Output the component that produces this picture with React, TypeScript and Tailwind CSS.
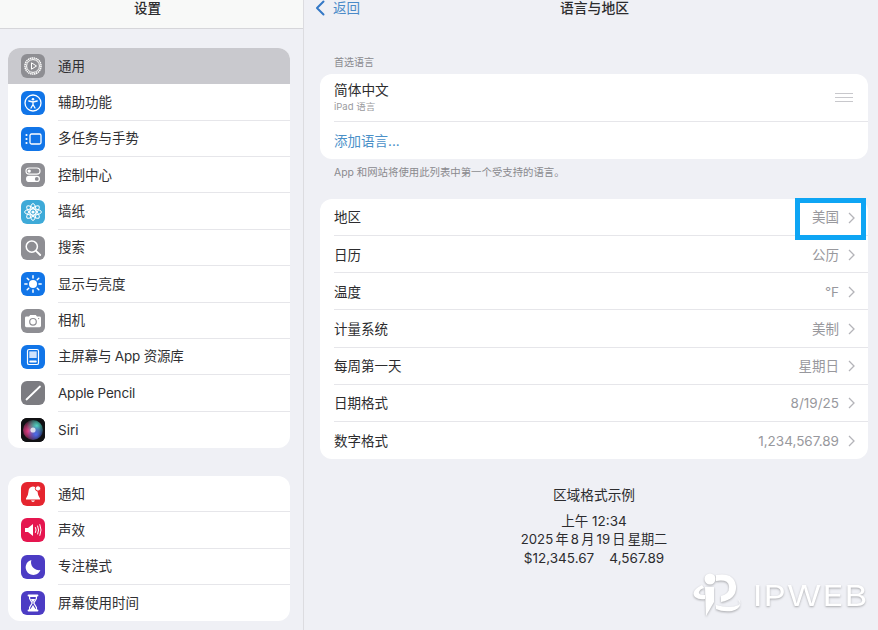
import type { ReactNode } from "react";

const FONT = "font-['Inter','Noto_Sans_CJK_SC',sans-serif]";

// settings icons, all drawn in a 24 box
const GeneralIcon = () => (
  <svg viewBox="0 0 24 24" className="w-6 h-6">
    <circle cx="12" cy="12" r="8" fill="none" stroke="#fff" strokeWidth="1.6" strokeDasharray="1.4 0.6" />
    <circle cx="12" cy="12" r="6.4" fill="none" stroke="#fff" strokeWidth="1" />
    <path d="M10.5 8.8 L15.5 12 L10.5 15.2 Z" fill="none" stroke="#fff" strokeWidth="1" />
  </svg>
);

const AccessIcon = () => (
  <svg viewBox="0 0 24 24" className="w-6 h-6">
    <circle cx="12" cy="12" r="8" fill="none" stroke="#fff" strokeWidth="1.3" />
    <circle cx="12" cy="8.2" r="1.3" fill="#fff" />
    <path d="M7.8 10 L12 11 L16.2 10 M12 11 V13.5 M12 13.5 L10 17 M12 13.5 L14 17" fill="none" stroke="#fff" strokeWidth="1.3" strokeLinecap="round" />
  </svg>
);

const MultitaskIcon = () => (
  <svg viewBox="0 0 24 24" className="w-6 h-6">
    <rect x="9" y="7" width="11" height="10" rx="1.5" fill="none" stroke="#fff" strokeWidth="1.3" />
    <circle cx="5.5" cy="8" r="1.1" fill="#fff" />
    <circle cx="5.5" cy="12" r="1.1" fill="#fff" />
    <circle cx="5.5" cy="16" r="1.1" fill="#fff" />
  </svg>
);

const ControlIcon = () => (
  <svg viewBox="0 0 24 24" className="w-6 h-6">
    <rect x="5" y="5" width="14" height="6.2" rx="3.1" fill="none" stroke="#fff" strokeWidth="1.2" />
    <circle cx="8.2" cy="8.1" r="1.7" fill="#fff" />
    <rect x="5" y="12.8" width="14" height="6.2" rx="3.1" fill="#fff" />
    <circle cx="15.8" cy="15.9" r="1.9" fill="#8e8e93" />
  </svg>
);

const WallpaperIcon = () => (
  <svg viewBox="0 0 24 24" className="w-6 h-6">
    {[0, 45, 90, 135].map((a) => (
      <ellipse key={a} cx="12" cy="12" rx="3.1" ry="8.4" fill="none" stroke="#fff" strokeWidth="1" transform={`rotate(${a} 12 12)`} />
    ))}
    <circle cx="12" cy="12" r="1.6" fill="#fff" />
  </svg>
);

const SearchIcon = () => (
  <svg viewBox="0 0 24 24" className="w-6 h-6">
    <circle cx="10.8" cy="10.6" r="5.6" fill="none" stroke="#fff" strokeWidth="1.5" />
    <path d="M15 14.8 L19.2 19" stroke="#fff" strokeWidth="1.8" strokeLinecap="round" />
  </svg>
);

const DisplayIcon = () => (
  <svg viewBox="0 0 24 24" className="w-6 h-6">
    <circle cx="12" cy="12" r="4" fill="#fff" />
    {[0, 45, 90, 135, 180, 225, 270, 315].map((a) => (
      <path key={a} d="M12 3.8 V6" stroke="#fff" strokeWidth="1.5" strokeLinecap="round" transform={`rotate(${a} 12 12)`} />
    ))}
  </svg>
);

const CameraIcon = () => (
  <svg viewBox="0 0 24 24" className="w-6 h-6">
    <path d="M4 9 Q4 7.6 5.4 7.6 H8 L9.2 6 H14.8 L16 7.6 H18.6 Q20 7.6 20 9 V16.8 Q20 18.2 18.6 18.2 H5.4 Q4 18.2 4 16.8 Z" fill="#fff" />
    <circle cx="12" cy="12.8" r="3.3" fill="none" stroke="#8e8e93" strokeWidth="1.2" />
    <circle cx="17.6" cy="9.6" r="0.7" fill="#8e8e93" />
  </svg>
);

const HomeIcon = () => (
  <svg viewBox="0 0 24 24" className="w-6 h-6">
    <rect x="6.5" y="4.5" width="11" height="15" rx="1.6" fill="none" stroke="#fff" strokeWidth="1.2" />
    <rect x="8.3" y="6.4" width="7.4" height="6.6" fill="#cfe2fb" />
    <rect x="8.3" y="15.4" width="7.4" height="2.2" rx="0.8" fill="#fff" />
  </svg>
);

const PencilIcon = () => (
  <svg viewBox="0 0 24 24" className="w-6 h-6">
    <path d="M5.5 18.5 L19 5.5" stroke="#fff" strokeWidth="1.8" strokeLinecap="round" />
  </svg>
);

const SiriIcon = () => (
  <svg viewBox="0 0 24 24" className="w-6 h-6">
    <defs>
      <radialGradient id="siri-pink" cx="0.3" cy="0.55" r="0.6">
        <stop offset="0" stopColor="#f0408a" />
        <stop offset="1" stopColor="#f0408a" stopOpacity="0" />
      </radialGradient>
      <radialGradient id="siri-teal" cx="0.68" cy="0.3" r="0.5">
        <stop offset="0" stopColor="#4fd8c4" />
        <stop offset="1" stopColor="#4fd8c4" stopOpacity="0" />
      </radialGradient>
      <radialGradient id="siri-blue" cx="0.65" cy="0.72" r="0.45">
        <stop offset="0" stopColor="#4a6cf0" />
        <stop offset="1" stopColor="#4a6cf0" stopOpacity="0" />
      </radialGradient>
    </defs>
    <rect width="24" height="24" fill="#111114" />
    <circle cx="12" cy="12" r="10" fill="url(#siri-pink)" />
    <circle cx="12" cy="12" r="10" fill="url(#siri-teal)" />
    <circle cx="12" cy="12" r="10" fill="url(#siri-blue)" />
    <circle cx="12" cy="12" r="2.6" fill="#fff" opacity="0.75" />
  </svg>
);

const BellIcon = () => (
  <svg viewBox="0 0 24 24" className="w-6 h-6">
    <path d="M12 4.5 Q7.6 4.8 7.4 10 Q7.3 13.6 5 16.4 V17.4 H19 V16.4 Q16.7 13.6 16.6 10 Q16.4 4.8 12 4.5 Z" fill="#fff" />
    <path d="M10 18.6 H14 Q13.4 20 12 20 Q10.6 20 10 18.6 Z" fill="#fff" />
    <circle cx="17" cy="6.4" r="2.7" fill="#fff" stroke="#e5252f" strokeWidth="1" />
  </svg>
);

const SoundIcon = () => (
  <svg viewBox="0 0 24 24" className="w-6 h-6">
    <path d="M4 10 H7 L12 6 V18 L7 14 H4 Z" fill="#fff" />
    <path d="M14.5 9.5 Q15.8 12 14.5 14.5 M16.7 8 Q18.6 12 16.7 16 M18.9 6.6 Q21.3 12 18.9 17.4" fill="none" stroke="#fff" strokeWidth="1" strokeLinecap="round" />
  </svg>
);

const MoonIcon = () => (
  <svg viewBox="0 0 24 24" className="w-6 h-6">
    <path d="M10.4 5 A7.6 7.6 0 1 0 19.4 15 A7.8 7.8 0 0 1 10.4 5 Z" fill="#fff" />
  </svg>
);

const HourglassIcon = () => (
  <svg viewBox="0 0 24 24" className="w-6 h-6">
    <path d="M7.5 4.5 H16.5 M7.5 19.5 H16.5" stroke="#fff" strokeWidth="1.8" strokeLinecap="round" />
    <path d="M8.6 5.5 H15.4 V7.6 L12.8 12 L15.4 16.4 V18.5 H8.6 V16.4 L11.2 12 L8.6 7.6 Z" fill="none" stroke="#fff" strokeWidth="1.2" />
    <path d="M9.8 8 H14.2 L12 11.4 Z M12 14 L14.4 18 H9.6 Z" fill="#fff" />
  </svg>
);

const Chevron = () => (
  <svg viewBox="0 0 7 12" className="w-[7px] h-3">
    <path d="M1 1 L6 6 L1 11" fill="none" stroke="#b4b4b9" strokeWidth="1.3" />
  </svg>
);

type RowProps = { icon: ReactNode; color: string; label: string; last?: boolean; active?: boolean; tight?: boolean };

const SideRow = ({ icon, color, label, last, active, tight }: RowProps) => (
  <div className={`flex items-center h-[36.36px] pl-[13px] ${active ? "bg-[#c9c9ce]" : ""}`}>
    <div className={`w-6 h-6 rounded-[6px] overflow-hidden shrink-0 ${color}`}>{icon}</div>
    <div className={`ml-[13px] flex-1 h-full flex items-center text-[13.5px] text-[#303033] ${tight ? "tracking-[-0.2px]" : ""} ${last || active ? "" : "border-b border-[#e6e6ea]"}`}>
      {label}
    </div>
  </div>
);

const group1 = [
  { label: "通用", color: "bg-[#8e8e93]", icon: <GeneralIcon />, active: true },
  { label: "辅助功能", color: "bg-[#1175e8]", icon: <AccessIcon /> },
  { label: "多任务与手势", color: "bg-[#1175e8]", icon: <MultitaskIcon /> },
  { label: "控制中心", color: "bg-[#8e8e93]", icon: <ControlIcon /> },
  { label: "墙纸", color: "bg-[#3eaad8]", icon: <WallpaperIcon /> },
  { label: "搜索", color: "bg-[#8e8e93]", icon: <SearchIcon /> },
  { label: "显示与亮度", color: "bg-[#1175e8]", icon: <DisplayIcon /> },
  { label: "相机", color: "bg-[#8e8e93]", icon: <CameraIcon /> },
  { label: "主屏幕与 App 资源库", color: "bg-[#1175e8]", icon: <HomeIcon />, tight: true },
  { label: "Apple Pencil", color: "bg-[#7c7c81]", icon: <PencilIcon />, tight: true },
  { label: "Siri", color: "bg-[#111114]", icon: <SiriIcon /> },
];

const group2 = [
  { label: "通知", color: "bg-[#e5252f]", icon: <BellIcon /> },
  { label: "声效", color: "bg-[#e5164f]", icon: <SoundIcon /> },
  { label: "专注模式", color: "bg-[#4c3cc4]", icon: <MoonIcon /> },
  { label: "屏幕使用时间", color: "bg-[#4c3cc4]", icon: <HourglassIcon /> },
];

const regionRows = [
  { label: "地区", value: "美国" },
  { label: "日历", value: "公历" },
  { label: "温度", value: "°F" },
  { label: "计量系统", value: "美制" },
  { label: "每周第一天", value: "星期日" },
  { label: "日期格式", value: "8/19/25" },
  { label: "数字格式", value: "1,234,567.89" },
];

const Sidebar = () => (
  <aside className="w-[304px] h-full shrink-0 bg-[#eff0f5] border-r border-[#dcdce0]">
    <div className="h-[29px] bg-[#f8f9f8] border-b border-[#d6d6da] flex justify-center pr-[8px]">
      <span className="text-[13.5px] leading-[16px] text-[#2c2c2e] font-medium">设置</span>
    </div>
    <div className="pt-[19px] pl-2 pr-[13px]">
      <div className="bg-white rounded-[12px] overflow-hidden">
        {group1.map((r, i) => (
          <SideRow key={r.label} {...r} last={i === group1.length - 1 || i === 0} />
        ))}
      </div>
      <div className="bg-white rounded-[12px] overflow-hidden mt-[28px]">
        {group2.map((r, i) => (
          <SideRow key={r.label} {...r} last={i === group2.length - 1} />
        ))}
      </div>
    </div>
  </aside>
);

const Watermark = () => (
  <div className="absolute left-[692px] top-[572px] flex items-center gap-[7px]">
    <svg viewBox="0 0 54 46" className="w-[54px] h-[46px] drop-shadow-[0_1px_1px_rgba(0,0,0,0.3)]">
      <circle cx="18" cy="7" r="5.5" fill="#fff" />
      <path d="M13 15 H22 V30 L14 44 Z" fill="#fff" />
      <path d="M24 3 Q42 0 44 14 Q45 27 29 30 V24 Q38 22 37 14 Q36 7 24 9 Z" fill="#fff" />
      <path d="M10 13 Q-2 19 3 25 Q7 28 13 27 V23 Q6 23 7 20 Q8 17 12 16 Z" fill="#fff" />
      <path d="M24 33 Q38 37 47 33 Q50 30 46 27 Q52 36 40 39 Q30 40 24 37 Z" fill="#fff" />
    </svg>
    <span className="origin-left scale-x-[1.2] font-['Inter',sans-serif] text-[29px] leading-none font-normal tracking-[1px] text-white [text-shadow:0_1px_2px_rgba(0,0,0,0.3)]">
      IPWEB
    </span>
  </div>
);

const App = () => {
  return (
    <div className={`relative w-[878px] h-[630px] overflow-hidden flex bg-[#eff0f5] ${FONT}`}>
      <Sidebar />
      <main className="flex-1 h-full pl-4 pr-[10px] relative">
        <header className="h-[16px] flex items-center -ml-[5px]">
          <svg viewBox="0 0 10 16" className="w-[10px] h-4">
            <path d="M8.5 1.5 L2 8 L8.5 14.5" fill="none" stroke="#3478c6" strokeWidth="2" strokeLinecap="round" strokeLinejoin="round" />
          </svg>
          <span className="ml-2 text-[13.5px] text-[#4a8ac8]">返回</span>
          <span className="ml-[200px] text-[13.8px] text-[#2c2c2e] font-medium">语言与地区</span>
        </header>

        <p className="mt-[39px] pl-[14px] h-[14px] leading-[14px] text-[10px] text-[#8a8a8e]">首选语言</p>
        <section className="mt-[5px] bg-white rounded-[12px]">
          <div className="h-[48px] ml-[14px] border-b border-[#e6e6ea] flex items-center justify-between pr-[15px]">
            <div className="flex flex-col mb-[2px]">
              <span className="text-[13.7px] leading-[18px] text-[#2c2c2e]">简体中文</span>
              <span className="mt-[2px] text-[9.5px] leading-[12px] text-[#9a9a9e]">iPad 语言</span>
            </div>
            <div className="w-[18px] flex flex-col gap-[3px]">
              <div className="h-px bg-[#c8c8cc]" />
              <div className="h-px bg-[#c8c8cc]" />
              <div className="h-px bg-[#c8c8cc]" />
            </div>
          </div>
          <div className="h-[37px] pl-[14px] pt-px flex items-center text-[13.5px] text-[#4a90c8]">添加语言...</div>
        </section>
        <p className="mt-[7px] pl-[14px] h-[13px] leading-[13px] text-[10.4px] text-[#8a8a8e]">App 和网站将使用此列表中第一个受支持的语言。</p>

        <section className="mt-[20px] bg-white rounded-[12px]">
          {regionRows.map((r, i) => (
            <div key={r.label} className="h-[37.14px] pl-[14px] flex items-center">
              <div className={`flex-1 h-full pt-px flex items-center justify-between pr-[13px] ${i === regionRows.length - 1 ? "" : "border-b border-[#e6e6ea]"}`}>
                <span className="text-[13.5px] text-[#2c2c2e]">{r.label}</span>
                <span className="flex items-center gap-[9px] text-[13.5px] text-[#98989d]">
                  {r.value}
                  <Chevron />
                </span>
              </div>
            </div>
          ))}
        </section>

        <div className="mt-[27px] flex flex-col items-center text-[#2c2c2e]">
          <span className="text-[13.7px] leading-[18px]">区域格式示例</span>
          <span className="mt-[8px] text-[13.5px] leading-[18.5px]">上午 12:34</span>
          <span className="text-[13.2px] leading-[18.5px] [word-spacing:-1.5px]">2025 年 8 月 19 日 星期二</span>
          <span className="text-[13.5px] leading-[18.5px] whitespace-pre">$12,345.67    4,567.89</span>
        </div>

        <div className="absolute left-[491px] top-[198px] w-[71px] h-[42px] border-[5px] border-[#0ea5f4]" />
      </main>
      <Watermark />
    </div>
  );
};

export default App;
